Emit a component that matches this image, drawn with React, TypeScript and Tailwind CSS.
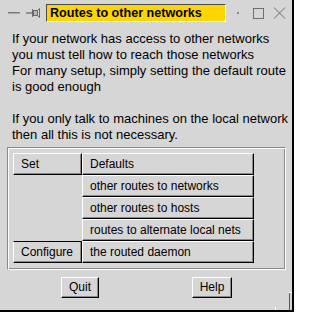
import React from 'react';

const raised =
  'border-t border-l border-white border-b border-r border-b-black border-r-black shadow-[inset_-1px_-1px_0_#8a8a8a] bg-[#d6d6d6] text-black';

const rightRows = [
  'Defaults',
  'other routes to networks',
  'other routes to hosts',
  'routes to alternate local nets',
  'the routed daemon',
];

function LeftIcons() {
  return (
    <svg width="46" height="18" viewBox="0 0 46 18">
      <line x1="8" y1="8.5" x2="20" y2="8.5" stroke="#7a7a7a" strokeWidth="1" />
      <line x1="8" y1="9.5" x2="20" y2="9.5" stroke="#a8a8a8" strokeWidth="1" />
      <line x1="26" y1="9" x2="32" y2="9" stroke="#7a7a7a" strokeWidth="1.5" />
      <line x1="32.5" y1="5" x2="32.5" y2="13" stroke="#6a6a6a" strokeWidth="1" />
      <rect x="33.5" y="6.5" width="4" height="5" fill="#b8b8b8" stroke="#6a6a6a" strokeWidth="1" />
      <path d="M37.5 6.5 L39.5 4.5 L39.5 13.5 L37.5 11.5" fill="none" stroke="#6a6a6a" strokeWidth="1" />
    </svg>
  );
}

function RightIcons() {
  return (
    <svg width="66" height="18" viewBox="0 0 66 18">
      <rect x="11" y="8" width="2" height="2" fill="#8a8a8a" />
      <rect x="27.5" y="4.5" width="10" height="10" fill="none" stroke="#6e6e6e" strokeWidth="1" />
      <path d="M48 3.5 L59 14.5 M59 3.5 L48 14.5" stroke="#6e6e6e" strokeWidth="1" />
    </svg>
  );
}

export default function App() {
  return (
    <div className="relative w-[294px] h-[312px] bg-[#d6d6d6] border-r-2 border-b-2 border-black font-['Liberation_Sans',Arial,sans-serif] text-black overflow-hidden">
      {/* title bar */}
      <div className="flex items-start h-[24px] pt-[4px]">
        <LeftIcons />
        <div className="w-[180px] h-[18px] bg-[#ffd500] border-t border-l border-[#4a4a4a] border-b-white border-r-white border-b border-r pl-[3px] text-[12.6px] font-bold leading-[16px] whitespace-nowrap">
          Routes to other networks
        </div>
        <RightIcons />
      </div>

      {/* explanation */}
      <div className="px-[12px] pt-[7px] text-[13px] leading-[16px] whitespace-nowrap">
        <p>If your network has access to other networks</p>
        <p>you must tell how to reach those networks</p>
        <p>For many setup, simply setting the default route</p>
        <p>is good enough</p>
        <p>&nbsp;</p>
        <p>If you only talk to machines on the local network</p>
        <p>then all this is not necessary.</p>
      </div>

      {/* group box */}
      <div className="mt-[4px] ml-[7px] w-[279px] h-[123px] border-t border-l border-[#8a8a8a] border-b border-r border-b-white border-r-white shadow-[inset_1px_1px_0_#fff,inset_-1px_-1px_0_#8a8a8a] p-[5px]">
        <div className="grid grid-cols-[69px_172px] grid-rows-[22px_22px_22px_22px_22px] text-[12px] leading-[20px] whitespace-nowrap">
          <div className={`${raised} pl-[7px]`}>Set</div>
          <div className={`${raised} pl-[7px]`}>{rightRows[0]}</div>
          <div className="row-span-3" />
          <div className={`${raised} pl-[7px]`}>{rightRows[1]}</div>
          <div className={`${raised} pl-[7px]`}>{rightRows[2]}</div>
          <div className={`${raised} pl-[7px]`}>{rightRows[3]}</div>
          <div className={`${raised} border-t-black pl-[7px]`}>Configure</div>
          <div className={`${raised} pl-[7px]`}>{rightRows[4]}</div>
        </div>
      </div>

      {/* bottom buttons */}
      <div className="mt-[7px] flex px-[14px] text-[12px] leading-[19px]">
        <div className="flex-1 flex justify-center">
          <button className={`${raised} h-[21px] px-[7px]`}>Quit</button>
        </div>
        <div className="flex-1 flex justify-center">
          <button className={`${raised} h-[21px] px-[7px]`}>Help</button>
        </div>
      </div>

      {/* resize corner marks */}
      <div className="absolute left-[289px] top-[292px] w-[3px] h-[1px] bg-white" />
      <div className="absolute left-[289px] top-[293px] w-[1px] h-[17px] bg-[#5a5a5a]" />
      <div className="absolute left-[275px] top-[307px] w-[1px] h-[3px] bg-white" />
    </div>
  );
}
